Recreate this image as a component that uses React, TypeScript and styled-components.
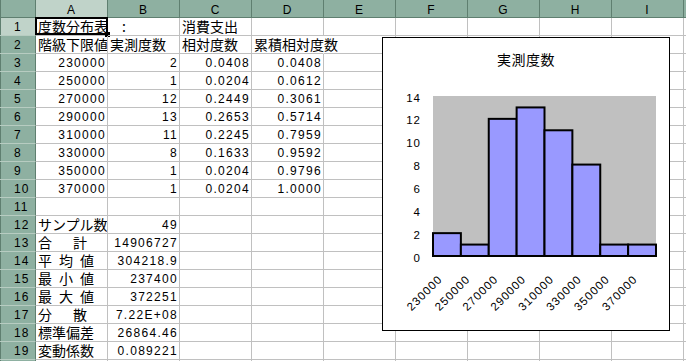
import React from "react";
import styled, { createGlobalStyle, css } from "styled-components";

const GlobalStyle = createGlobalStyle`
  html, body { margin: 0; padding: 0; background: #fff; }
  body { width: 686px; height: 361px; overflow: hidden; }
`;

// data
const COLS = ["A", "B", "C", "D", "E", "F", "G", "H", "I"];

const classes = [
  ["230000", "2", "0.0408", "0.0408"],
  ["250000", "1", "0.0204", "0.0612"],
  ["270000", "12", "0.2449", "0.3061"],
  ["290000", "13", "0.2653", "0.5714"],
  ["310000", "11", "0.2245", "0.7959"],
  ["330000", "8", "0.1633", "0.9592"],
  ["350000", "1", "0.0204", "0.9796"],
  ["370000", "1", "0.0204", "1.0000"],
];

// en spaces (\u2002) keep the spread-out labels as wide as in the sheet
const stats = [
  ["サンプル数", "49"],
  ["合\u3000\u2002計", "14906727"],
  ["平\u2002均\u2002値", "304218.9"],
  ["最\u2002小\u2002値", "237400"],
  ["最\u2002大\u2002値", "372251"],
  ["分\u3000\u2002散", "7.22E+08"],
  ["標準偏差", "26864.46"],
  ["変動係数", "0.089221"],
];

type CellData = { t: string; k: "jp" | "num"; spill?: boolean } | null;
const jp = (t: string, spill = false): CellData => ({ t, k: "jp", spill });
const num = (t: string): CellData => ({ t, k: "num" });

const rows: CellData[][] = [
  [jp("度数分布表　:", true), null, jp("消費支出")],
  [jp("階級下限値"), jp("実測度数"), jp("相対度数"), jp("累積相対度数", true)],
  ...classes.map((r) => r.map(num)),
  [],
  ...stats.map(([a, b]) => [jp(a), num(b)]),
  [],
];

const counts = [2, 1, 12, 13, 11, 8, 1, 1];

//styles
const Sheet = styled.div`
  position: relative;
  width: 686px;
  height: 361px;
  overflow: hidden;
  background: #fff;
`;

const Grid = styled.div`
  display: grid;
  grid-template-columns: 36px repeat(9, 72px) 1fr;
  grid-auto-rows: 18px;
`;

const headerBg = "#8eb0a1";
const headerActive = "#c0d3c9";
const headerLine = "#5f7f70";

const Corner = styled.div`
  box-sizing: border-box;
  background: ${headerBg};
  border-right: 1px solid ${headerLine};
  border-bottom: 1px solid ${headerLine};
  box-shadow: inset 1px 0 0 ${headerLine};
`;

const ColHead = styled.div<{ $active?: boolean }>`
  box-sizing: border-box;
  display: flex;
  align-items: flex-end;
  justify-content: center;
  background: ${(p) => (p.$active ? headerActive : headerBg)};
  border-right: 1px solid ${headerLine};
  border-bottom: 1px solid ${headerLine};
  font-family: "Liberation Sans", sans-serif;
  font-size: 12px;
  line-height: 13px;
  letter-spacing: 1px;
  color: #000;
`;

const RowHead = styled.div<{ $active?: boolean }>`
  box-sizing: border-box;
  display: flex;
  align-items: flex-end;
  justify-content: flex-start;
  padding: 0 0 1px 14px;
  background: ${(p) => (p.$active ? headerActive : headerBg)};
  border-right: 1px solid ${headerLine};
  border-bottom: 1px solid #b7ccc1;
  box-shadow: inset 1px 0 0 ${headerLine};
  font-family: "Liberation Sans", sans-serif;
  font-size: 12px;
  line-height: 13px;
  letter-spacing: 1px;
  color: #000;
`;

const Cell = styled.div<{ $right?: boolean; $spill?: boolean; $selected?: boolean }>`
  position: relative;
  box-sizing: border-box;
  display: flex;
  align-items: flex-end;
  justify-content: ${(p) => (p.$right ? "flex-end" : "flex-start")};
  padding: 0 1px 1px 2px;
  border-right: 1px solid ${(p) => (p.$spill ? "transparent" : "#c0c0c0")};
  border-bottom: 1px solid #c0c0c0;
  overflow: ${(p) => (p.$spill ? "visible" : "hidden")};
  white-space: nowrap;
  color: #000;
  ${(p) =>
    p.$selected &&
    css`
      &::before {
        content: "";
        position: absolute;
        left: -1px;
        top: -1px;
        right: -1px;
        bottom: 0;
        border: 2px solid #000;
      }
      &::after {
        content: "";
        position: absolute;
        right: -3px;
        bottom: -2px;
        width: 5px;
        height: 5px;
        background: #000;
      }
    `}
`;

const Jp = styled.span`
  font-family: "Noto Sans CJK JP", sans-serif;
  font-size: 14px;
  line-height: 16px;
`;

const Num = styled.span`
  font-family: "Liberation Sans", "Noto Sans CJK JP", sans-serif;
  font-size: 12px;
  line-height: 13px;
  letter-spacing: 1.3px;
`;

const ChartBox = styled.div`
  position: absolute;
  left: 382px;
  top: 37px;
  width: 288px;
  height: 294px;
  box-sizing: border-box;
  border: 1px solid #000;
  background: #fff;
  display: flex;
  flex-direction: column;
  align-items: center;
`;

const ChartTitle = styled.div`
  margin-top: 13px;
  font-family: "Noto Sans CJK JP", sans-serif;
  font-size: 14px;
  line-height: 16px;
  letter-spacing: 0.5px;
  color: #000;
`;

const Plot = styled.svg`
  display: block;
  font-family: "Liberation Sans", sans-serif;
  font-size: 11.5px;
  letter-spacing: 1px;
`;

const PX = 50;
const PY = 29;
const PW = 223;
const PH = 160;
const MAX = 14;

const Histogram = () => {
  const bw = PW / counts.length;
  const ticks = [0, 2, 4, 6, 8, 10, 12, 14];
  return (
    <ChartBox>
      <ChartTitle>実測度数</ChartTitle>
      <Plot width={286} height={263}>
        <rect x={PX} y={PY} width={PW} height={PH} fill="#c0c0c0" />
        {counts.map((v, i) => {
          const h = (v * PH) / MAX;
          return (
            <rect
              key={i}
              x={PX + i * bw}
              y={PY + PH - h}
              width={bw}
              height={h}
              fill="#9999ff"
              stroke="#000"
              strokeWidth={2}
            />
          );
        })}
        <line x1={PX} x2={PX + PW} y1={PY + PH} y2={PY + PH} stroke="#000" strokeWidth={2} />
        {ticks.map((t) => (
          <text key={t} x={38} y={PY + PH - (t * PH) / MAX + 5.5} textAnchor="end">
            {t}
          </text>
        ))}
        {classes.map((c, i) => {
          const x = PX + bw * (i + 0.5) - 4;
          const y = 213;
          return (
            <text key={c[0]} x={x} y={y} textAnchor="end" transform={`rotate(-45 ${x} ${y})`}>
              {c[0]}
            </text>
          );
        })}
      </Plot>
    </ChartBox>
  );
};

export default function App() {
  return (
    <>
      <GlobalStyle />
      <Sheet>
        <Grid>
          <Corner />
          {COLS.map((c) => (
            <ColHead key={c} $active={c === "A"}>
              {c}
            </ColHead>
          ))}
          <ColHead />
          {rows.map((row, ri) => (
            <React.Fragment key={ri}>
              <RowHead $active={ri === 0}>{ri + 1}</RowHead>
              {Array.from({ length: 10 }, (_, ci) => {
                const c = row[ci];
                return (
                  <Cell
                    key={ci}
                    $right={c?.k === "num"}
                    $spill={c?.spill}
                    $selected={ri === 0 && ci === 0}
                  >
                    {c && (c.k === "jp" ? <Jp>{c.t}</Jp> : <Num>{c.t}</Num>)}
                  </Cell>
                );
              })}
            </React.Fragment>
          ))}
        </Grid>
        <Histogram />
      </Sheet>
    </>
  );
}
